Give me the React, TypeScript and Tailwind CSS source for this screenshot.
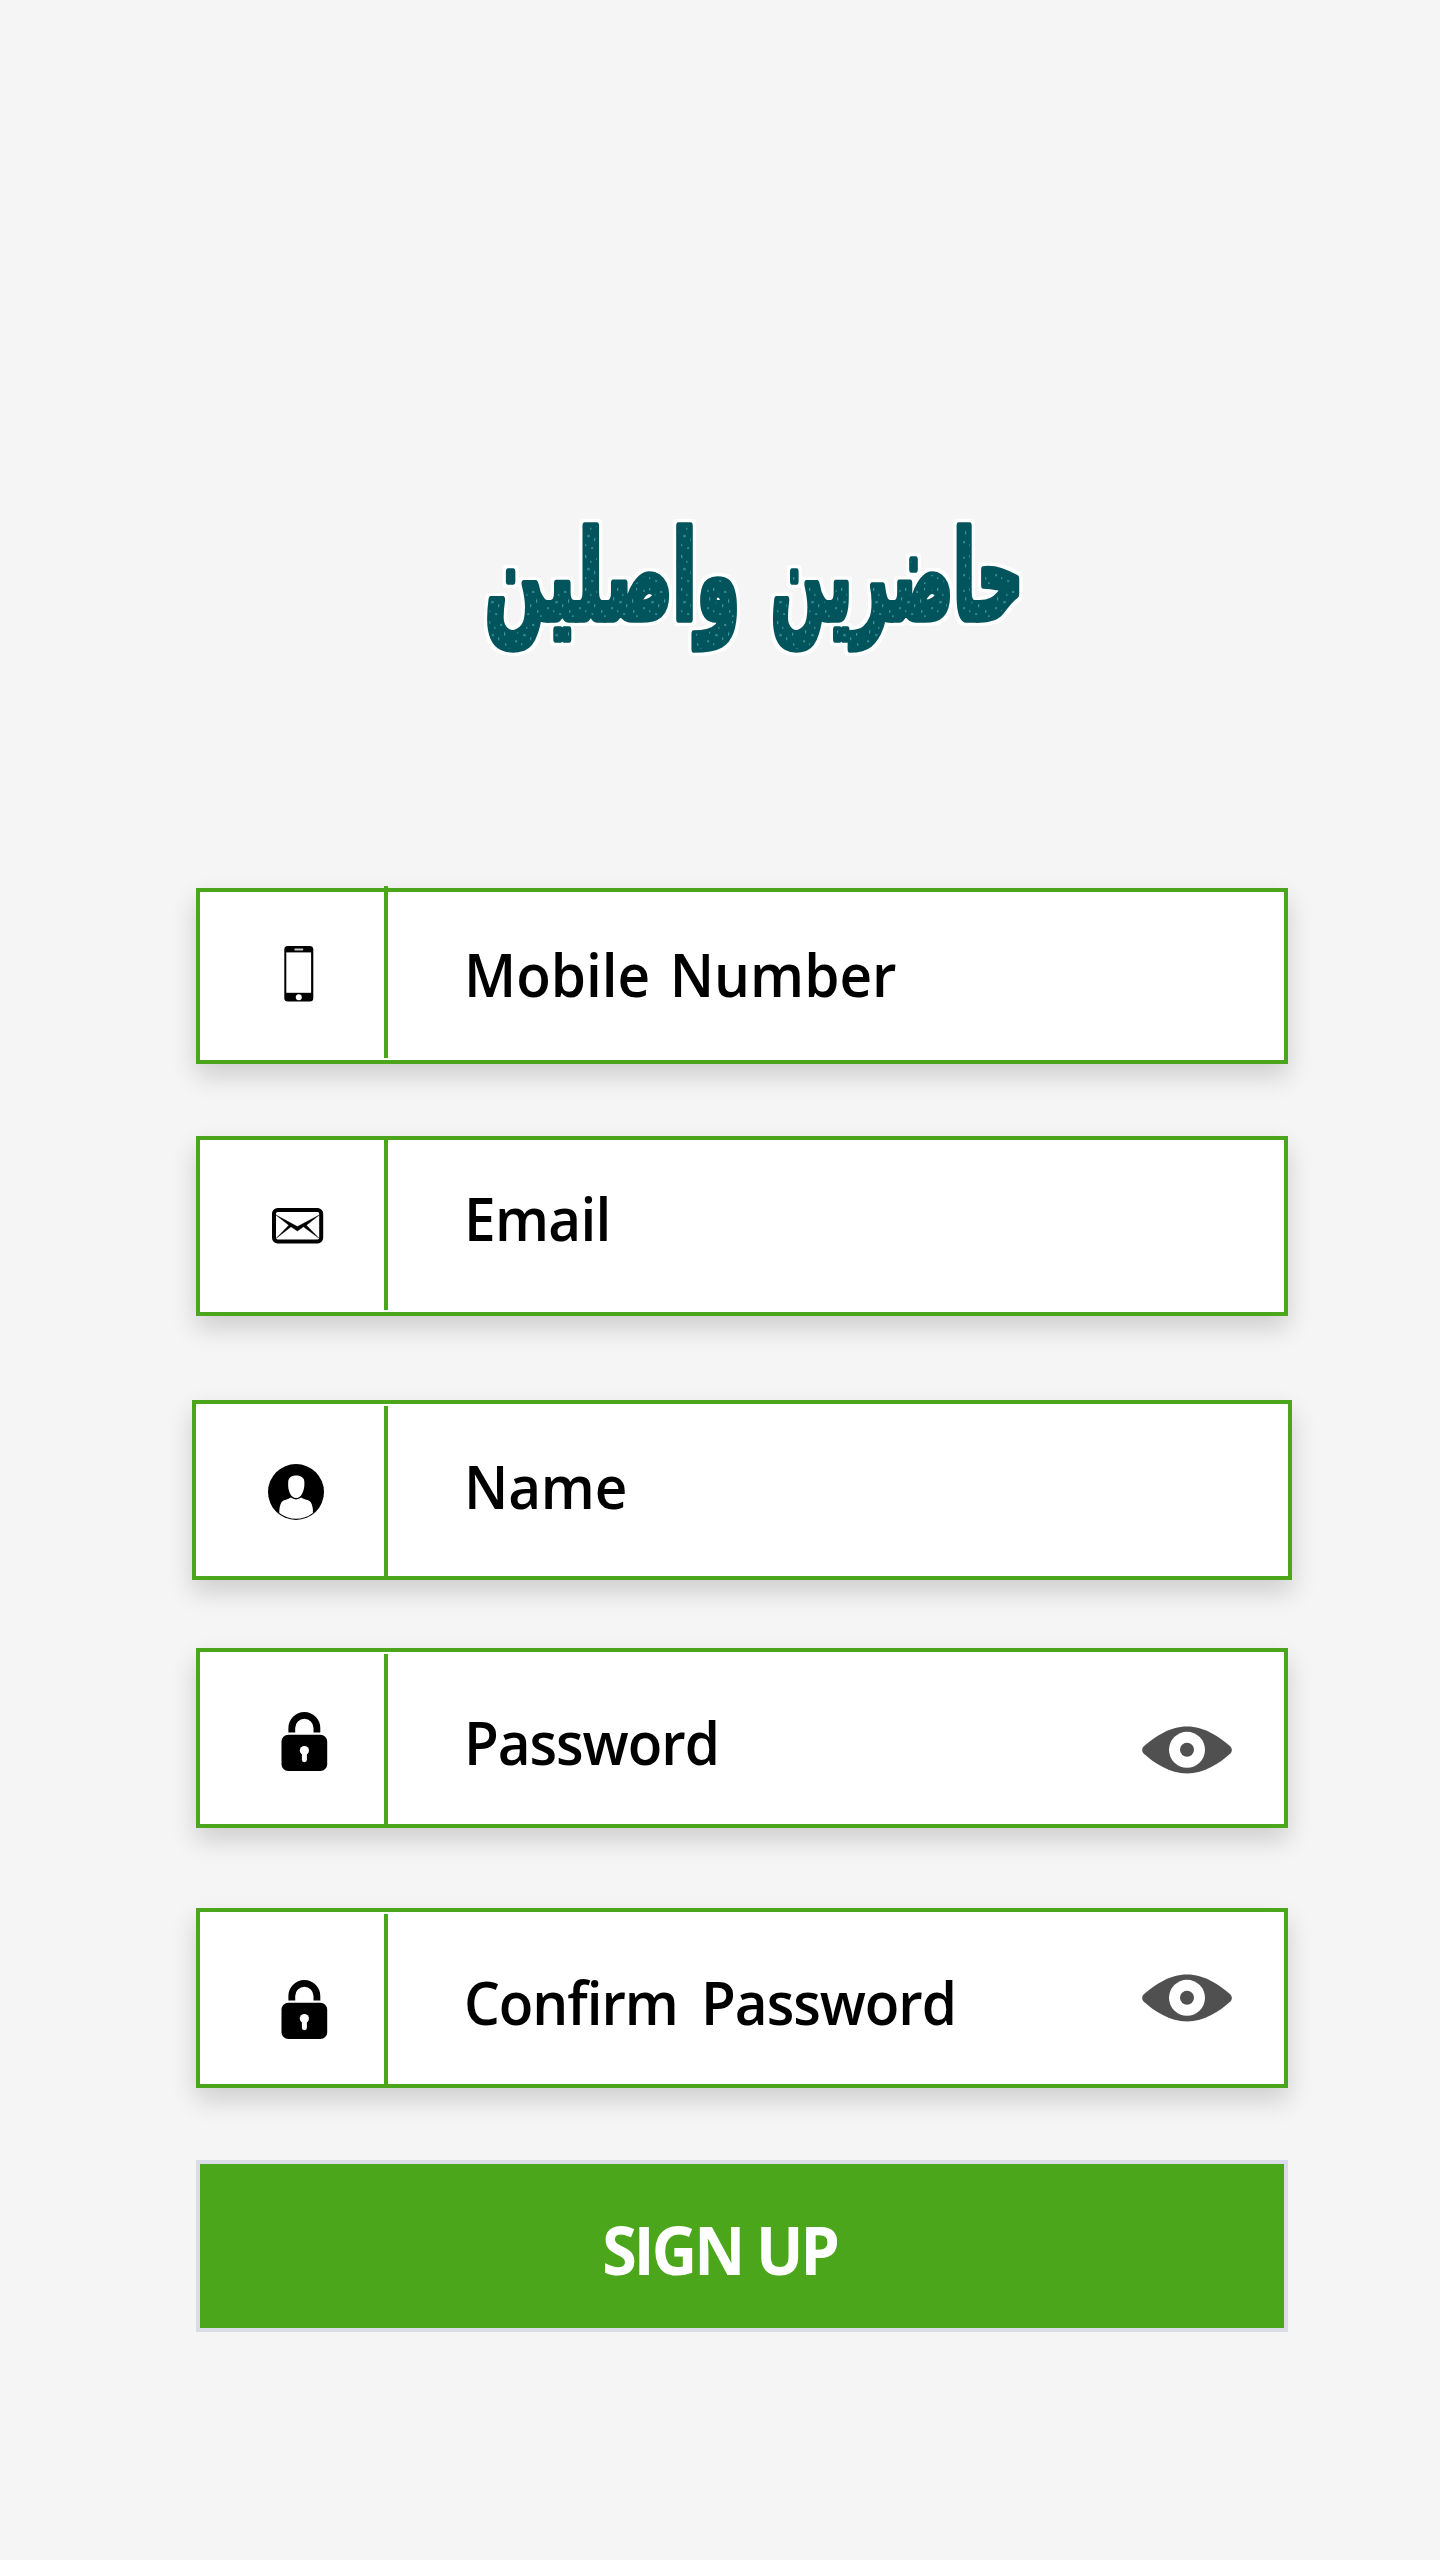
import type { ReactNode } from "react";

const speckles = [
  [3, 4, 2, 1.2], [9, 2, 1.3, 2.4], [14, 8, 1.6, 1.2], [5, 11, 1.2, 2.6], [20, 5, 2.4, 1.4],
  [11, 15, 3, 1.3], [18, 18, 1.3, 2.2], [3, 21, 2.2, 1.4], [9, 24, 1.4, 1.4], [24, 13, 1.2, 2.8],
  [15, 27, 2.4, 1.2], [25, 24, 1.4, 1.8], [28, 2, 1.2, 1.8], [28, 29, 1.8, 1.2],
];

function Logo() {
  const words = [
    { text: "حاضرين", x: 1023, length: 252 },
    { text: "واصلين", x: 740, length: 255 },
  ];
  return (
    <svg
      className="ml-[470px] block h-[160px] w-[570px] shrink-0 overflow-visible [filter:drop-shadow(3px_0_0_#fff)_drop-shadow(-3px_0_0_#fff)_drop-shadow(0_3px_0_#fff)_drop-shadow(0_-3px_0_#fff)]"
      viewBox="470 505 570 160"
    >
      <defs>
        <pattern id="grain" width="32" height="26" patternUnits="userSpaceOnUse">
          <rect width="32" height="32" fill="#02545c" />
          {speckles.map(([x, y, w, h], i) => (
            <rect key={i} x={x} y={y * 0.8} width={w} height={h} rx="0.6" fill="#3a9aa8" />
          ))}
        </pattern>
      </defs>
      {words.map((w) => (
        <text
          key={w.text}
          x={w.x}
          y="0"
          transform="translate(0 619) scale(1 1.27)"
          direction="rtl"
          textAnchor="start"
          textLength={w.length}
          lengthAdjust="spacingAndGlyphs"
          fontFamily="'DejaVu Sans', sans-serif"
          fontWeight="700"
          fontSize="96"
          strokeLinejoin="round"
          stroke="#02545c"
          strokeWidth="6"
          fill="url(#grain)"
          style={{ paintOrder: "stroke" }}
        >
          {w.text}
        </text>
      ))}
    </svg>
  );
}

function PhoneIcon() {
  return (
    <svg className="block h-[56px] w-[30px]" viewBox="0 0 30 56">
      <rect x="0.3" y="0" width="29" height="55.6" rx="3.5" fill="#000" />
      <rect x="2.3" y="6.4" width="24.8" height="40.4" fill="#fff" />
      <rect x="10.3" y="2.6" width="9" height="2" rx="1" fill="#ccc" />
      <circle cx="14.8" cy="51.3" r="3" fill="#fff" />
    </svg>
  );
}

function MailIcon() {
  return (
    <svg className="block h-[36px] w-[52px]" viewBox="0 0 52 36">
      <rect x="2" y="2" width="47.2" height="31.4" rx="3.6" fill="none" stroke="#000" strokeWidth="4" />
      <path d="M4 7 25.4 18.6 47.3 7 34.4 17.2 47 30.2 31.4 18.8 25.4 23 19 18.8 4.3 30.2 16.8 17.2Z" fill="#000" stroke="#000" strokeWidth="0.4" />
    </svg>
  );
}

function UserIcon() {
  return (
    <svg className="block size-[56px]" viewBox="0 0 56 56">
      <circle cx="28" cy="28" r="28" fill="#000" />
      <path d="M28.2 11.4C33 11.4 36.5 13.6 36.4 18.2 36.6 23.4 35.8 26.2 34.2 29.4 32.8 32.2 31 34 28.2 34S23.4 32.2 22 29.4C20.5 26.2 19.9 23.4 20.2 18.2 20.2 14 23.2 11.4 28.2 11.4Z" fill="#fff" />
      <path d="M22.8 33.6Q25.2 35.4 28 35.4T33.2 33.6C36 35.6 40.6 35.8 42.6 38 44.4 40.6 45.2 44.8 44.9 49A28 28 0 0 1 28 54.8 28 28 0 0 1 11.3 49C11.2 44.6 12 40.6 13.6 38 15.6 35.8 20 35.6 22.8 33.6Z" fill="#fff" />
    </svg>
  );
}

function LockIcon() {
  return (
    <svg className="block h-[60px] w-[48px]" viewBox="0 0 48 60">
      <path d="M10.8 20.4V16A12.5 12.5 0 0 1 35.9 16V20.4" fill="none" stroke="#000" strokeWidth="6.8" />
      <rect x="0.5" y="22.8" width="45.7" height="36.2" rx="6.8" fill="#000" />
      <circle cx="23.4" cy="38.6" r="4.6" fill="#fff" />
      <rect x="20.9" y="38.6" width="5" height="11.6" rx="2.4" fill="#fff" />
    </svg>
  );
}

function EyeIcon() {
  return (
    <svg className="block h-[48px] w-[90px]" viewBox="0 0 90 48">
      <path d="M1.6 20.4C12 11 28 0.4 45 0.4S78 11 88.4 20.4Q91.4 24 88.4 27.4C78 37 62 47.4 45 47.4S12 37 1.6 27.4Q-1.4 24 1.6 20.4Z" fill="#505050" />
      <circle cx="45" cy="23.8" r="18" fill="#fff" />
      <circle cx="45" cy="23.8" r="7" fill="#505050" />
    </svg>
  );
}

type FieldProps = {
  box: string;
  cell: string;
  divider: string;
  label: string;
  labelClass: string;
  icon: ReactNode;
  eye?: string;
};

function Field({ box, cell, divider, label, labelClass, icon, eye }: FieldProps) {
  return (
    <div className={`flex shrink-0 items-start border-4 border-[#4ca61c] bg-white shadow-[0_12px_24px_rgba(0,0,0,0.16)] ${box}`}>
      <div className={`shrink-0 ${cell}`}>{icon}</div>
      <div className={`h-[172px] w-1 shrink-0 bg-[#4ca61c] ${divider}`} />
      <div className={`ml-[76px] origin-left scale-x-96 text-[59px] leading-[80px] font-semibold whitespace-nowrap text-black ${labelClass}`}>{label}</div>
      {eye && (
        <div className={`mr-[52px] ml-auto ${eye}`}>
          <EyeIcon />
        </div>
      )}
    </div>
  );
}

export default function App() {
  return (
    <main className="flex h-[2560px] w-[1440px] flex-col overflow-hidden bg-[#f5f5f5] pt-[505px] font-['Open_Sans',sans-serif]">
      <Logo />
      <form className="mt-[223px] flex flex-col">
        <Field box="ml-[196px] h-[176px] w-[1092px]" cell="w-[184px] pl-[84px] pt-[54px]" divider="-mt-1.5" label="Mobile Number" labelClass="mt-[42px] [word-spacing:5px]" icon={<PhoneIcon />} />
        <Field box="mt-[72px] ml-[196px] h-[180px] w-[1092px]" cell="w-[184px] pl-[72px] pt-[68px]" divider="-mt-0.5" label="Email" labelClass="mt-[38px] tracking-[-0.7px]" icon={<MailIcon />} />
        <Field box="mt-[84px] ml-[192px] h-[180px] w-[1100px]" cell="w-[188px] pl-[72px] pt-[60px]" divider="mt-0.5" label="Name" labelClass="mt-[42px] tracking-[-0.2px]" icon={<UserIcon />} />
        <Field box="mt-[68px] ml-[196px] h-[180px] w-[1092px]" cell="w-[184px] pl-[81px] pt-[60px]" divider="mt-0.5" label="Password" labelClass="mt-[50px] tracking-[-1.1px]" icon={<LockIcon />} eye="mt-[74px]" />
        <Field box="mt-[80px] ml-[196px] h-[180px] w-[1092px]" cell="w-[184px] pl-[81px] pt-[68px]" divider="mt-0.5" label="Confirm Password" labelClass="mt-[50px] tracking-[-1.1px] [word-spacing:10px]" icon={<LockIcon />} eye="mt-[62px]" />
        <button type="button" className="mt-[72px] ml-[196px] flex h-[172px] w-[1092px] shrink-0 justify-center border-4 border-[#dadde6] bg-[#4ca61c] pt-[40px] pr-[44px] text-[66px] leading-[90px] font-bold tracking-[-3px] whitespace-nowrap text-white">
          <span className="block scale-x-95">SIGN UP</span>
        </button>
      </form>
    </main>
  );
}
